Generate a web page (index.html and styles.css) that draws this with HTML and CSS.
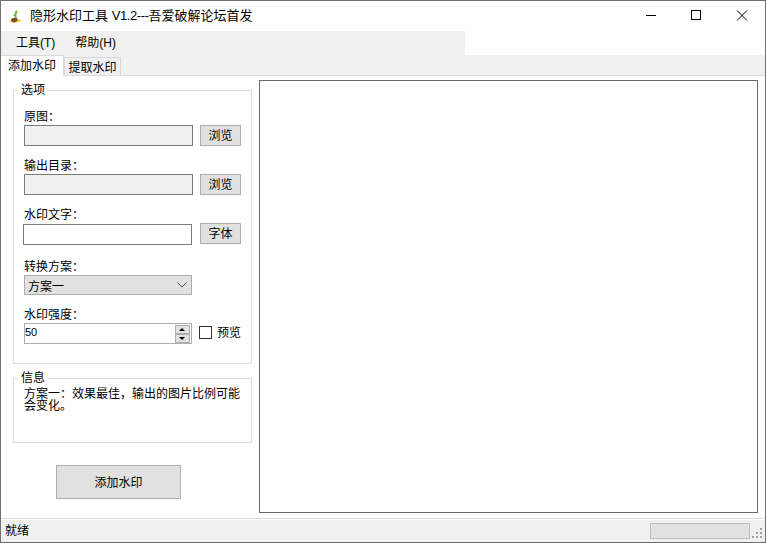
FILE: index.html
```html
<!DOCTYPE html>
<html lang="zh-CN">
<head>
<meta charset="utf-8">
<title>隐形水印工具</title>
<link rel="stylesheet" href="styles.css">
</head>
<body>
<div class="window">
  <header class="titlebar">
    <svg class="app-icon" width="16" height="16" viewBox="0 0 16 16">
      <path d="M1 13.5 L6 11 L12 11.5 L14.5 13 L8 15 L3 14.5Z" fill="#f4d35e"/>
      <path d="M3.5 10.5 L8.5 9.5 L10 12.5 L6 14.5 L3 13Z" fill="#7a4a22"/>
      <path d="M6.8 10 L6.8 5 Q6.8 2.5 9 2 L9.5 5 L8.4 6 L8.4 10Z" fill="#6fbf2e"/>
      <path d="M5 7 L7 6.5 L7 8.5Z" fill="#3f8f1c"/>
    </svg>
    <span class="title">隐形水印工具 <span class="ver">V1.2---</span>吾爱破解论坛首发</span>
    <div class="caption">
      <svg class="cap" width="46" height="30" viewBox="0 0 46 30"><path d="M18 14.5H28" stroke="#000" fill="none"/></svg>
      <svg class="cap" width="46" height="30" viewBox="0 0 46 30"><rect x="17.5" y="9.5" width="9" height="9" stroke="#000" fill="none"/></svg>
      <svg class="cap" width="46" height="30" viewBox="0 0 46 30"><path d="M17 9.5L27 19.5M27 9.5L17 19.5" stroke="#000" fill="none"/></svg>
    </div>
  </header>
  <nav class="menubar">
    <span class="menu-item">工具(T)</span>
    <span class="menu-item">帮助(H)</span>
  </nav>
  <div class="tabs">
    <span class="tab active">添加水印</span>
    <span class="tab">提取水印</span>
  </div>
  <main class="page">
    <section class="side">
      <fieldset class="group options">
        <legend>选项</legend>
        <div class="field">
          <label>原图：</label>
          <div class="row"><input class="text disabled" disabled><button class="btn">浏览</button></div>
        </div>
        <div class="field">
          <label>输出目录：</label>
          <div class="row"><input class="text disabled" disabled><button class="btn">浏览</button></div>
        </div>
        <div class="field">
          <label>水印文字：</label>
          <div class="row shift"><input class="text"><button class="btn">字体</button></div>
        </div>
        <div class="field f-combo">
          <label>转换方案：</label>
          <div class="combo"><span>方案一</span>
            <svg width="10" height="6" viewBox="0 0 10 6"><path d="M0.5 0.5L5 5L9.5 0.5" stroke="#555" fill="none"/></svg>
          </div>
        </div>
        <div class="field f-spin">
          <label>水印强度：</label>
          <div class="row">
            <div class="spin">
              <span class="spin-val">50</span>
              <span class="spin-btns">
                <span class="spin-btn"><i class="up"></i></span>
                <span class="spin-btn"><i class="down"></i></span>
              </span>
            </div>
            <span class="check"></span><span class="check-label">预览</span>
          </div>
        </div>
      </fieldset>
      <fieldset class="group info">
        <legend>信息</legend>
        <p>方案一：效果最佳，输出的图片比例可能会变化。</p>
      </fieldset>
      <button class="btn action">添加水印</button>
    </section>
    <section class="canvas"></section>
  </main>
  <footer class="status">
    <span class="status-text">就绪</span>
    <span class="progress"></span>
    <svg class="grip" width="11" height="11" viewBox="0 0 11 11" fill="#a0a0a0">
      <rect x="8" y="0" width="2" height="2"/><rect x="8" y="4" width="2" height="2"/><rect x="4" y="4" width="2" height="2"/>
      <rect x="8" y="8" width="2" height="2"/><rect x="4" y="8" width="2" height="2"/><rect x="0" y="8" width="2" height="2"/>
    </svg>
  </footer>
</div>
</body>
</html>
```
FILE: styles.css
```css
* { box-sizing: border-box; }
html, body { margin: 0; padding: 0; }
body {
  width: 766px;
  height: 543px;
  font-family: "Liberation Sans", "Noto Sans CJK SC", sans-serif;
  font-size: 12px;
  color: #000;
  background: #fff;
  overflow: hidden;
}
.window {
  width: 766px;
  height: 543px;
  border: 1px solid #707070;
  display: flex;
  flex-direction: column;
  background: #fff;
}
.titlebar {
  height: 30px;
  flex: none;
  display: flex;
  align-items: center;
  padding-left: 7px;
}
.app-icon { flex: none; }
.title {
  margin-left: 6px;
  font-size: 13px;
  line-height: 30px;
  white-space: nowrap;
}
.ver { letter-spacing: -0.4px; }
.caption { margin-left: auto; display: flex; margin-right: -1px; }
.cap { display: block; width: 46px; height: 30px; }
.menubar {
  height: 24px;
  flex: none;
  width: 464px;
  background: #f0f0f0;
  display: flex;
  align-items: center;
  gap: 20px;
  padding: 0 0 0 15px;
  font-size: 12px;
}
.menu-item { line-height: 22px; }
.tabs {
  height: 21px;
  flex: none;
  display: flex;
  align-items: flex-end;
  background: #f0f0f0;
  border-bottom: 1px solid #dcdcdc;
  padding-right: 2px;
}
.tab {
  height: 18px;
  width: 57px;
  margin-bottom: 0;
  text-align: center;
  line-height: 20px;
  background: #f0f0f0;
  border: 1px solid #d9d9d9;
  border-bottom: 0;
}
.tab.active {
  height: 21px;
  width: 63px;
  line-height: 21px;
  background: #fff;
  border-left: 0;
  border-bottom: 1px solid #fff;
  margin-bottom: -1px;
  position: relative;
}
.page {
  flex: 1;
  min-height: 0;
  display: flex;
  background: #fff;
}
.side {
  width: 258px;
  flex: none;
  padding: 7px 0 0 12px;
}
.group {
  margin: 0;
  border: 1px solid #dcdcdc;
  width: 239px;
  padding: 0;
  min-width: 0;
}
.group legend {
  margin-left: -6px;
  padding: 0 3px;
  font-size: 12px;
  line-height: 14px;
  height: 14px;
}
.options {
  height: 281px;
  padding: 11px 10px 0 10px;
}
.field { height: 49px; }
.field label { display: block; line-height: 19px; height: 17px; }
.row {
  display: flex;
  align-items: flex-start;
}
.shift { margin-left: -1px; }
.text {
  width: 169px;
  height: 21px;
  border: 1px solid #7a7a7a;
  background: #fff;
  padding: 0;
  margin: 0 7px 0 0;
  flex: none;
  border-radius: 0;
  outline: none;
}
.text.disabled { background: #f0f0f0; }
.shift .text { margin-top: 1px; }
.shift .btn { margin-left: 1px; }
.btn {
  width: 41px;
  height: 21px;
  background: #e1e1e1;
  border: 1px solid #adadad;
  padding: 1px 0 0;
  font: inherit;
  font-size: 12px;
  line-height: 18px;
  color: #000;
  border-radius: 0;
}
.f-combo { height: 48px; margin-top: 3px; }
.combo {
  width: 168px;
  height: 20px;
  background: #e1e1e1;
  border: 1px solid #adadad;
  display: flex;
  align-items: center;
  justify-content: space-between;
  padding: 0 4px 0 3px;
}
.f-spin { height: 37px; margin-top: 0; }
.spin {
  width: 168px;
  height: 21px;
  border: 1px solid #adadad;
  display: flex;
  align-items: center;
  justify-content: space-between;
  padding-left: 0;
  background: #fff;
}
.spin-val {
  font-size: 11px;
  padding-bottom: 3px;
}
.spin-btns {
  width: 15px;
  height: 18px;
  margin-right: 1px;
  display: flex;
  flex-direction: column;
  gap: 0;
}
.spin-btn {
  flex: 1;
  background: #e1e1e1;
  border: 1px solid #adadad;
  display: flex;
  align-items: center;
  justify-content: center;
}
.up, .down {
  display: block;
  width: 0;
  height: 0;
  border-left: 3px solid transparent;
  border-right: 3px solid transparent;
}
.up { border-bottom: 3px solid #000; }
.down { border-top: 3px solid #000; }
.check {
  width: 13px;
  height: 13px;
  border: 1px solid #333;
  background: #fff;
  margin: 3px 0 0 7px;
  flex: none;
}
.check-label { margin-left: 5px; line-height: 21px; }
.info {
  margin-top: 7px;
  height: 72px;
  padding: 0 8px 0 10px;
}
.info p {
  margin: 3px 0 0;
  line-height: 12px;
  font-size: 12px;
}
.action {
  display: block;
  width: 125px;
  height: 34px;
  margin: 22px 0 0 43px;
}
.canvas {
  width: 499px;
  height: 433px;
  margin-top: 4px;
  border: 1px solid #6a6a6a;
  background: #fff;
  flex: none;
}
.status {
  height: 24px;
  flex: none;
  background: #f0f0f0;
  border-top: 1px solid #dcdcdc;
  box-shadow: inset 0 1px 0 #fff;
  display: flex;
  align-items: center;
  padding: 0 2px 0 4px;
}
.status-text { font-size: 12px; line-height: 24px; padding-top: 1px; }
.progress {
  width: 100px;
  height: 16px;
  margin-left: auto;
  background: #e1e1e1;
  border: 1px solid #bcbcbc;
}
.grip { margin: 6px 0 0 2px; flex: none; }
```
